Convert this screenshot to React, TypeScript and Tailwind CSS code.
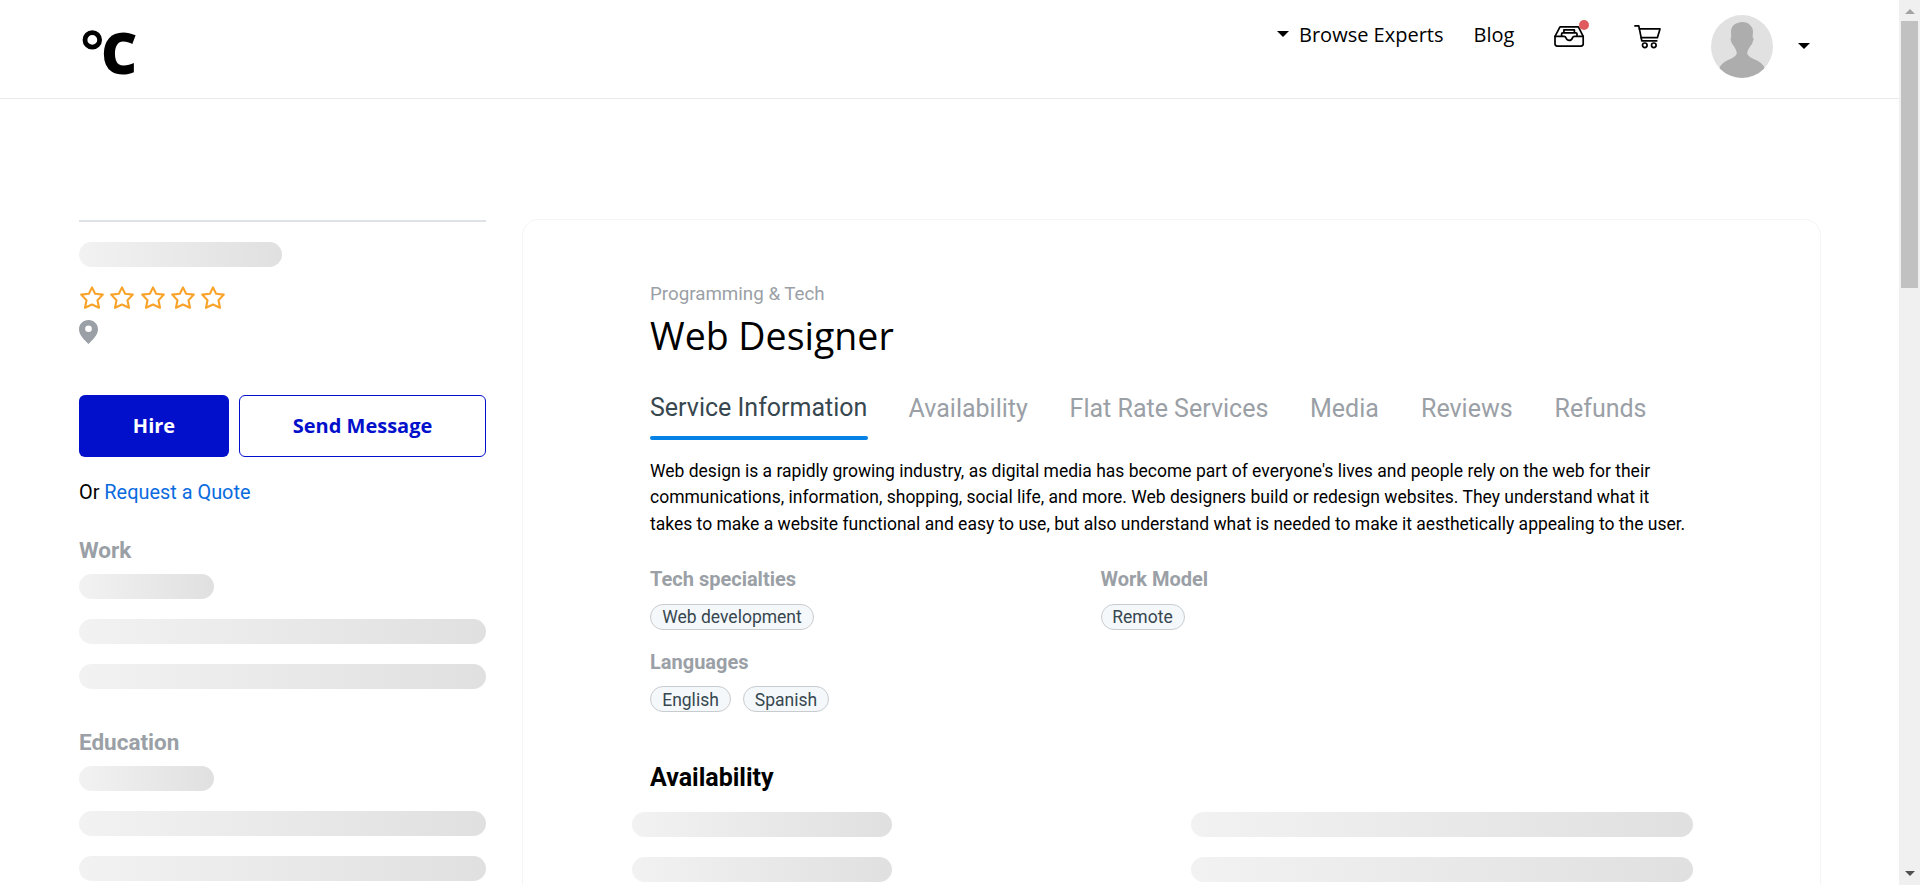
import React from "react";

function Skeleton({ className }: { className: string }) {
  return <div className={`h-[25px] rounded-full bg-linear-to-r from-[#f2f2f2] to-[#e0e0e0] ${className}`} />;
}

function Caret() {
  return <div className="h-0 w-0 border-x-[6px] border-t-[6px] border-x-transparent border-t-black" />;
}

function Star() {
  return (
    <svg className="h-6 w-6 shrink-0" viewBox="0 0 24 24" fill="none" stroke="#f9a32a" strokeWidth="2.1" strokeLinejoin="round">
      <path d="M12 1.4 L15.1 7.8 L22.8 8.6 L17.5 14.2 L19 21.8 L12 18.5 L5 21.8 L6.5 14.2 L1.2 8.6 L8.9 7.8 Z" />
    </svg>
  );
}

function Chip({ label, className }: { label: string; className: string }) {
  return (
    <span className={`flex h-[26px] items-center justify-center rounded-full border border-[#c9cccf] bg-[#f4f8fb] text-[17.5px] text-[#37474f] ${className}`}>
      {label}
    </span>
  );
}

function Header() {
  return (
    <header className="flex h-[99px] shrink-0 items-start border-b border-[#ebebeb] pl-[82px]">
      <svg className="mt-[30px] h-5 w-5" viewBox="0 0 20 20" fill="none">
        <circle cx="10.3" cy="9.9" r="7.3" stroke="#000" strokeWidth="4.8" />
      </svg>
      <div className="mt-[9px] -ml-px flex-1 font-['Open_Sans'] text-[56px] leading-[86px] font-extrabold">C</div>
      <div className="mt-[31px] mr-[10px]"><Caret /></div>
      <a className="mt-5 w-[144px] font-['Open_Sans'] text-[20px] leading-[30px] whitespace-nowrap">Browse Experts</a>
      <a className="mt-5 ml-[30.6px] w-[41.4px] font-['Open_Sans'] text-[20px] leading-[30px]">Blog</a>
      <div className="relative mt-[25px] ml-[39px] h-[23px] w-[31px]">
        <svg className="h-[23px] w-[31px]" viewBox="0 0 31 23" fill="none" stroke="#000" strokeWidth="1.7" strokeLinejoin="round" strokeLinecap="round">
          <path d="M1 11.4 L6 1.8 H24.4 L29.2 11.4 V18.8 Q29.2 21.1 27 21.1 H3.2 Q1 21.1 1 18.8 Z" />
          <path d="M1 11.4 H10 Q11.4 11.4 11.8 12.6 Q12.8 15.4 15.2 15.4 Q17.6 15.4 18.6 12.6 Q19 11.4 20.4 11.4 H29.2" />
          <path d="M7.6 11 V9 Q7.6 7.9 8.8 7.9 H21.8 Q23 7.9 23 9 V11 M9.9 7.6 V4.9 H20.4 V7.6" />
        </svg>
        <span className="absolute -top-[5px] left-[25px] h-[10px] w-[10px] rounded-full bg-[#e05b5e]" />
      </div>
      <svg className="mt-6 ml-[49px] h-[25px] w-[28px]" viewBox="0 0 28 25" fill="none" stroke="#000" strokeWidth="1.7" strokeLinejoin="round" strokeLinecap="round">
        <path d="M1 1.9 H4.8 L7.8 16.8 H22.8" />
        <path d="M5.4 4.9 H26 L23.4 13.7 H7.2" />
        <circle cx="10.8" cy="21.3" r="2.3" />
        <circle cx="19.8" cy="21.3" r="2.3" />
      </svg>
      <svg className="mt-[15px] ml-[49px] h-[63px] w-[62px]" viewBox="0 0 62 63">
        <clipPath id="avatar"><ellipse cx="31" cy="31.5" rx="31" ry="31.5" /></clipPath>
        <g clipPath="url(#avatar)">
          <rect width="62" height="63" fill="#e1e1e1" />
          <path fill="#adadad" d="M31 7 C38 7 42.3 12 42 17 L41.6 22.5 Q43.5 23.5 42 26 Q41.5 29 39.4 31 Q36.8 34.5 36.2 38 C37 42 41.5 43.5 46 45.5 Q51.5 48 53.5 53 V63 H8.5 V53 Q10.5 48 16 45.5 C20.5 43.5 25 42 25.8 38 Q25.2 34.5 22.8 31 Q20.8 29 20 26 Q18.8 23.5 20.2 22.5 L20 17 C20 12 23 8.5 27 8 Q29 7 31 7 Z" />
        </g>
      </svg>
      <div className="mt-[43px] mr-[89px] ml-[25px]"><Caret /></div>
    </header>
  );
}

function Sidebar() {
  return (
    <aside className="w-[407px] shrink-0 pt-px">
      <div className="h-[2px] bg-[#dee2e6]" />
      <Skeleton className="mt-5 w-[203px]" />
      <div className="mt-[19px] ml-px flex gap-[6.3px]">
        <Star /><Star /><Star /><Star /><Star />
      </div>
      <svg className="mt-[10px] h-6 w-[19px]" viewBox="0 0 19 24">
        <path fill="#9aa0a6" fillRule="evenodd" d="M9.5 0 C4.2 0 0 4 0 9.2 C0 15 5.5 20 9.5 24 C13.5 20 19 15 19 9.2 C19 4 14.8 0 9.5 0 Z M9.5 5.4 A3.3 3.3 0 1 1 9.5 12 A3.3 3.3 0 1 1 9.5 5.4 Z" />
      </svg>
      <div className="mt-[51px] flex gap-[10px] font-['Open_Sans'] text-[20px] font-bold">
        <button className="h-[62px] w-[150px] rounded-[6px] bg-[#0210cb] text-white">Hire</button>
        <button className="h-[62px] flex-1 rounded-[6px] border border-[#0210cb] text-[#0210cb]">Send Message</button>
      </div>
      <p className="mt-[21px] text-[19.9px] leading-[30px]">Or <a className="text-[#0a6bdf]">Request a Quote</a></p>
      <h3 className="mt-[27px] text-[22.5px] leading-[30px] font-bold text-[#9aa0a6]">Work</h3>
      <div className="mt-[9px] flex flex-col gap-5">
        <Skeleton className="w-[135px]" /><Skeleton className="w-full" /><Skeleton className="w-full" />
      </div>
      <h3 className="mt-[38px] text-[22.5px] leading-[30px] font-bold text-[#9aa0a6]">Education</h3>
      <div className="mt-[9px] flex flex-col gap-5">
        <Skeleton className="w-[135px]" /><Skeleton className="w-full" /><Skeleton className="w-full" />
      </div>
    </aside>
  );
}

function Service() {
  return (
    <main className="ml-9 h-[800px] w-[1299px] shrink-0 rounded-[16px] border border-[#f5f5f5] pt-[60px] pl-[127px]">
      <p className="text-[18.75px] leading-7 text-[#9aa0a6]">Programming &amp; Tech</p>
      <h1 className="mt-1 font-['Open_Sans'] text-[37.5px] leading-[48px]">Web Designer</h1>
      <nav className="mt-[33px] flex text-[25px] leading-[30px] whitespace-nowrap text-[#9aa0a6]">
        <a className="h-[47px] w-[218px] text-[#37474f]">Service Information<span className="mt-[13px] block h-1 rounded-full bg-[#0681e5]" /></a>
        <a className="mt-px ml-[40.6px] w-[121px]">Availability</a>
        <a className="mt-px ml-10 w-[200px]">Flat Rate Services</a>
        <a className="mt-px ml-[40.4px] w-[69px]">Media</a>
        <a className="mt-px ml-[42px] w-[92px]">Reviews</a>
        <a className="mt-px ml-[41.6px]">Refunds</a>
      </nav>
      <p className="mt-[18px] text-[17.5px] leading-[26.25px] whitespace-nowrap">
        Web design is a rapidly growing industry, as digital media has become part of everyone's lives and people rely on the web for their<br />
        communications, information, shopping, social life, and more. Web designers build or redesign websites. They understand what it<br />
        takes to make a website functional and easy to use, but also understand what is needed to make it aesthetically appealing to the user.
      </p>
      <div className="mt-[28.25px] flex">
        <section className="w-[450.5px]">
          <h4 className="text-[20px] leading-7 font-bold text-[#9aa0a6]">Tech specialties</h4>
          <div className="mt-[11px] flex"><Chip label="Web development" className="w-[164px] leading-6" /></div>
        </section>
        <section>
          <h4 className="text-[20px] leading-7 font-bold text-[#9aa0a6]">Work Model</h4>
          <div className="mt-[11px] flex"><Chip label="Remote" className="w-[84px] leading-6" /></div>
        </section>
      </div>
      <h4 className="mt-[18px] text-[20px] leading-7 font-bold text-[#9aa0a6]">Languages</h4>
      <div className="mt-[10px] flex gap-3"><Chip label="English" className="w-[81px] pt-[2px] leading-6" /><Chip label="Spanish" className="w-[86px] pt-[2px] leading-6" /></div>
      <h2 className="mt-[51px] text-[25px] leading-[30px] font-bold">Availability</h2>
      <div className="mt-[19px] -ml-[18px] flex gap-[299px]">
        <div className="flex flex-col gap-5"><Skeleton className="w-[260px]" /><Skeleton className="w-[260px]" /></div>
        <div className="flex flex-col gap-5"><Skeleton className="w-[502px]" /><Skeleton className="w-[502px]" /></div>
      </div>
    </main>
  );
}

export default function App() {
  return (
    <div className="flex h-[885px] w-[1920px] overflow-hidden bg-white font-[Roboto,sans-serif] text-black">
      <div className="flex h-[885px] w-[1899px] flex-col overflow-hidden">
        <Header />
        <div className="flex pt-[120px] pl-[79px]">
          <Sidebar />
          <Service />
        </div>
      </div>
      <div className="flex w-[21px] flex-col items-center bg-[#f0f0f0]">
        <div className="mt-[9px] h-0 w-0 border-x-[5px] border-b-[5px] border-x-transparent border-b-[#a3a3a3]" />
        <div className="mt-[7px] h-[267px] w-[17px] bg-[#c1c1c1]" />
        <div className="mt-auto mb-[9px] h-0 w-0 border-x-[5px] border-t-[5px] border-x-transparent border-t-[#505050]" />
      </div>
    </div>
  );
}
